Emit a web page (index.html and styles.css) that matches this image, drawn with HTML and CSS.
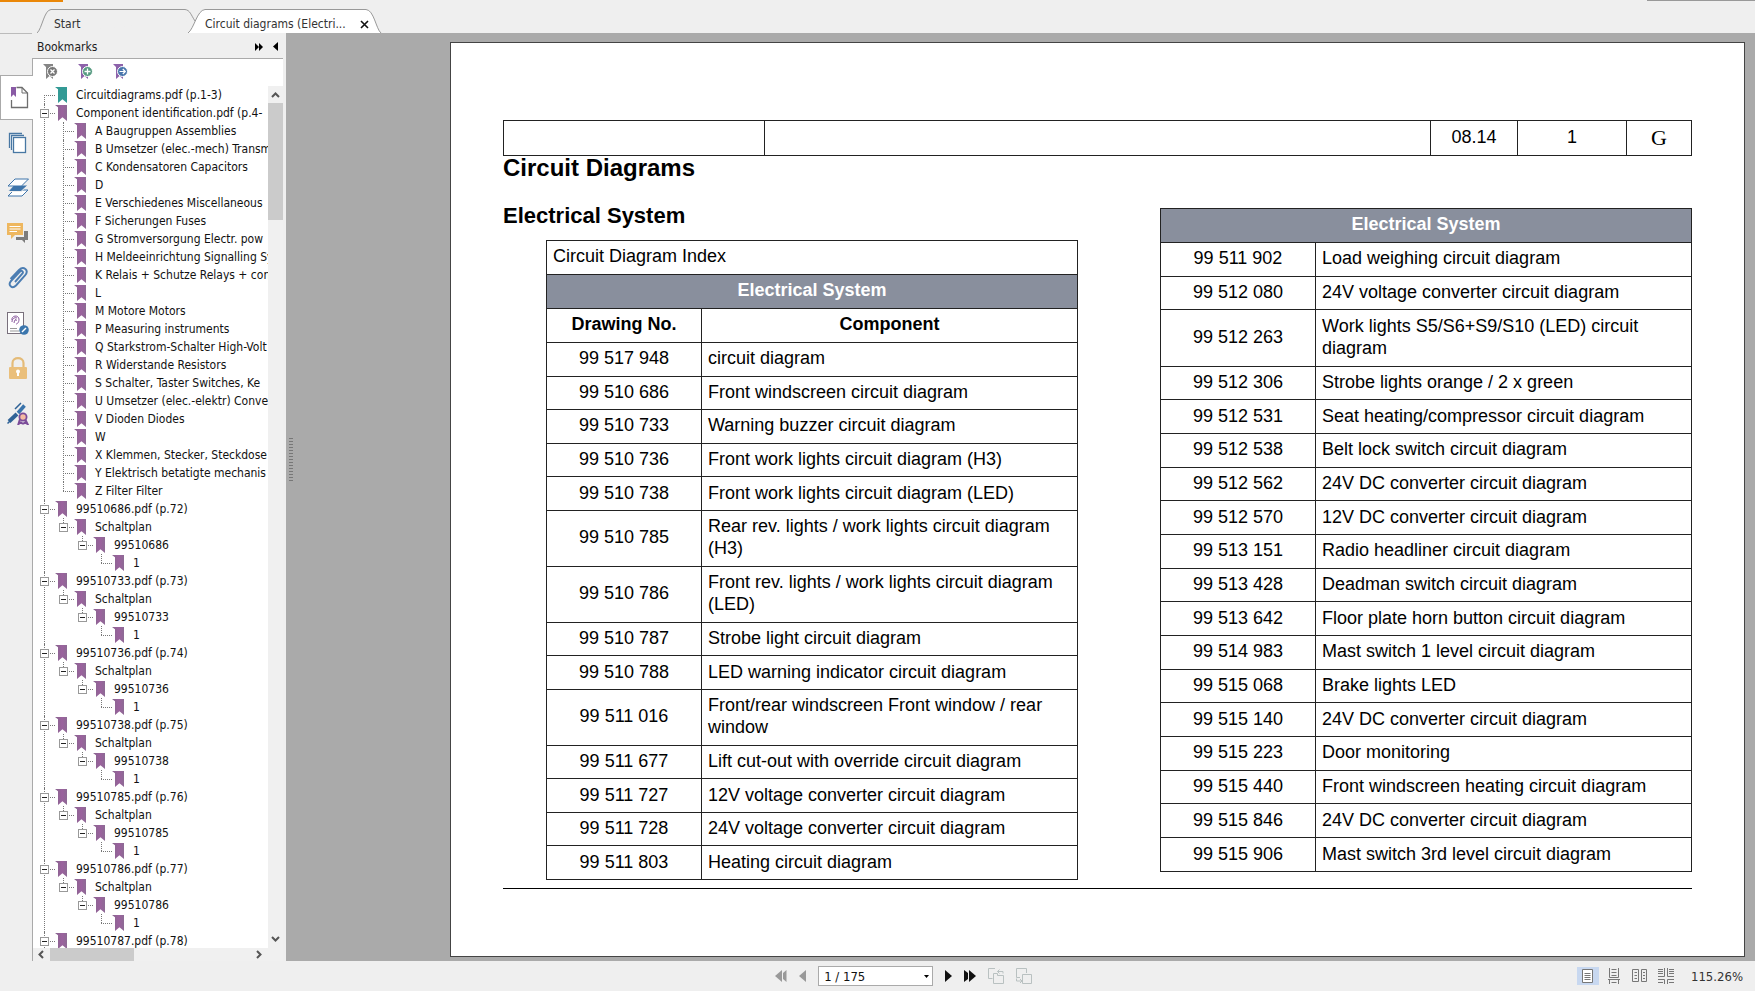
FILE: index.html
```html
<!DOCTYPE html>
<html lang="en">
<head>
<meta charset="utf-8">
<title>Circuit diagrams</title>
<link rel="stylesheet" href="styles.css">
</head>
<body>
<div class="app">
  <header class="tabbar">
    <span class="accent"></span>
    <span class="edge"></span>
    <button class="tab tab-start" type="button">
      <svg class="tab-shape" width="160" height="24" viewBox="0 0 160 24"><path d="M0 24 C5 20 7 1 14 0.5 H148 C153 1 154 6 158 12"/></svg>
      <span>Start</span>
    </button>
    <button class="tab tab-active" type="button">
      <svg class="tab-shape" width="194" height="24" viewBox="0 0 194 24"><path d="M0 24 C6 20 9 1 17 0.5 H178 C186 1 188 20 193 24"/></svg>
      <span>Circuit diagrams (Electri...</span>
      <svg class="close" width="9" height="9" viewBox="0 0 9 9"><path d="M1 1L8 8M8 1L1 8" stroke="#111" stroke-width="1.6"/></svg>
    </button>
  </header>

  <div class="main">
    <nav class="rail">
      <button class="rail-btn current" type="button" aria-label="Bookmarks"><svg width="20" height="24" viewBox="0 0 20 24"><path d="M7.5 2.5H13L18.500 8V22.500H2.500V15" fill="none" stroke="#6e6e6e" stroke-width="1.300"/><path d="M13 2.500V8H18.500" fill="none" stroke="#6e6e6e"/><path d="M2 2H7V12L4.500 9.500L2 12Z" fill="#8a5ba5"/></svg></button>
      <button class="rail-btn" type="button" aria-label="Pages"><svg width="20" height="24" viewBox="0 0 20 24"><g fill="#fff" stroke="#4877a3" stroke-width="1.300"><path d="M1.500 17V2.500H14"/><path d="M3.500 19V4.500H16" /><rect x="5.500" y="6.500" width="12" height="15"/></g></svg></button>
      <button class="rail-btn" type="button" aria-label="Layers"><svg width="22" height="22" viewBox="0 0 22 22"><path d="M7 13H21L15 19H1Z" fill="#fff" stroke="#3f75aa"/><path d="M7 8H21L14 14.500H1Z" fill="#3f75aa" stroke="#efefef"/><path d="M8 2H21.500L14.500 9H1Z" fill="#fff" stroke="#3f75aa"/></svg></button>
      <button class="rail-btn" type="button" aria-label="Comments"><svg width="22" height="22" viewBox="0 0 22 22"><path d="M17 9H21V18H18V21L15 18H9V15H17Z" fill="#7c7c7c"/><path d="M0 1H16V13H8L4 17V13H0Z" fill="#eeb75f"/><path d="M2.500 4.500H13.500M2.500 7H13.500M2.500 9.500H10" stroke="#fff"/></svg></button>
      <button class="rail-btn" type="button" aria-label="Attachments"><svg width="22" height="24" viewBox="0 0 22 24"><path d="M8 16L15.500 7.500C17 5.500 14.500 4 13 5.500L4 15C0.500 19 5 23.500 9 19.500L18 9.500C22.500 4 16.500 -0.500 12 4L3.500 13" fill="none" stroke="#4b7db2" stroke-width="1.900"/></svg></button>
      <button class="rail-btn" type="button" aria-label="Signatures"><svg width="22" height="24" viewBox="0 0 22 24"><rect x="0.500" y="1.500" width="16" height="21" fill="#fff" stroke="#79707c"/><path d="M5 9C4 5 11 3 12 8C12 12 10 13 9 13M7 12C8 7 10 8 9 10M5 11C5 8 7 6 10 7" fill="none" stroke="#89589d"/><path d="M3 17.500H10M3 20H12" stroke="#999"/><circle cx="17" cy="19" r="4.800" fill="#3b76ad"/><path d="M15 21L19 17" stroke="#fff" stroke-width="1.500"/></svg></button>
      <button class="rail-btn" type="button" aria-label="Security"><svg width="20" height="24" viewBox="0 0 20 24"><path d="M4.500 12V7C4.500 0.500 15.500 0.500 15.500 7V12" fill="none" stroke="#e4bb78" stroke-width="2.200"/><rect x="1" y="11" width="18" height="12" rx="1" fill="#eabf7b"/><circle cx="10" cy="15.500" r="2" fill="#fff"/><path d="M10 15V20" stroke="#fff" stroke-width="2"/></svg></button>
      <button class="rail-btn" type="button" aria-label="Digital signatures"><svg width="22" height="24" viewBox="0 0 22 24"><path d="M2 20.500L10 13" stroke="#2f6296" stroke-width="4"/><path d="M11 12L17.500 4.500" stroke="#3973ab" stroke-width="3.500"/><path d="M8 8L14 2M0.500 22.500L3 20" stroke="#2f6296" stroke-width="1.500"/><path d="M13 18L11.500 23L14 21.500L16 23M18 18L20.500 23L18 21.500L16 23" fill="none" stroke="#7b4c99" stroke-width="2"/><circle cx="16" cy="16" r="3.600" fill="#f5bba1" stroke="#7b4c99" stroke-width="1.800"/></svg></button>
    </nav>

    <aside class="panel">
      <div class="panel-head">
        <h2>Bookmarks</h2>
        <button type="button" aria-label="Expand"><svg width="8" height="8" viewBox="0 0 8 8"><path d="M0 0L4 4L0 8ZM4 0L8 4L4 8Z"/></svg></button>
        <button type="button" aria-label="Collapse panel"><svg width="5" height="9" viewBox="0 0 5 9"><path d="M5 0V9L0 4.500Z"/></svg></button>
      </div>
      <div class="panel-body">
        <div class="tools">
          <button type="button" aria-label="Delete bookmark"><svg width="15" height="16" viewBox="0 0 15 16"><path d="M0 0H10V15L6.500 12L3 15V3Z" fill="#858585"/><circle cx="9.500" cy="7.500" r="5" fill="#777" stroke="#fff"/><path d="M7.500 5.500L11.500 9.500M11.500 5.500L7.500 9.500" stroke="#fff" stroke-width="1.300"/></svg></button>
          <button type="button" aria-label="Add bookmark"><svg width="15" height="16" viewBox="0 0 15 16"><path d="M0 0H10V15L6.500 12L3 15V3Z" fill="#8d62aa"/><circle cx="9.500" cy="7.500" r="5" fill="#559a80" stroke="#fff"/><path d="M6.500 7.500H12.500M9.500 4.500V10.500" stroke="#fff" stroke-width="1.300"/></svg></button>
          <button type="button" aria-label="Go to bookmark"><svg width="15" height="16" viewBox="0 0 15 16"><path d="M0 0H10V15L6.500 12L3 15V3Z" fill="#8d62aa"/><circle cx="9.500" cy="7.500" r="5" fill="#4976ac" stroke="#fff"/><path d="M6.500 7.500H12M9.800 5L12.300 7.500L9.800 10" fill="none" stroke="#fff" stroke-width="1.200"/></svg></button>
        </div>
        <div class="scroller">
          <ul class="tree">
            <li><a class="node teal" href="#">Circuitdiagrams.pdf (p.1-3)</a></li>
            <li><button class="toggle" type="button" aria-label="Collapse"></button><a class="node" href="#">Component identification.pdf (p.4-</a>
              <ul>
                <li><a class="node" href="#">A Baugruppen Assemblies</a></li>
                <li><a class="node" href="#">B Umsetzer (elec.-mech) Transm</a></li>
                <li><a class="node" href="#">C Kondensatoren Capacitors</a></li>
                <li><a class="node" href="#">D</a></li>
                <li><a class="node" href="#">E Verschiedenes Miscellaneous</a></li>
                <li><a class="node" href="#">F Sicherungen Fuses</a></li>
                <li><a class="node" href="#">G Stromversorgung Electr. pow</a></li>
                <li><a class="node" href="#">H Meldeeinrichtung Signalling Sy</a></li>
                <li><a class="node" href="#">K Relais + Schutze Relays + con</a></li>
                <li><a class="node" href="#">L</a></li>
                <li><a class="node" href="#">M Motore Motors</a></li>
                <li><a class="node" href="#">P Measuring instruments</a></li>
                <li><a class="node" href="#">Q Starkstrom-Schalter High-Volt</a></li>
                <li><a class="node" href="#">R Widerstande Resistors</a></li>
                <li><a class="node" href="#">S Schalter, Taster Switches, Ke</a></li>
                <li><a class="node" href="#">U Umsetzer (elec.-elektr) Conve</a></li>
                <li><a class="node" href="#">V Dioden Diodes</a></li>
                <li><a class="node" href="#">W</a></li>
                <li><a class="node" href="#">X Klemmen, Stecker, Steckdose</a></li>
                <li><a class="node" href="#">Y Elektrisch betatigte mechanis</a></li>
                <li><a class="node" href="#">Z Filter Filter</a></li>
              </ul>
            </li>
            <li><button class="toggle" type="button" aria-label="Collapse"></button><a class="node" href="#">99510686.pdf (p.72)</a>
              <ul><li><button class="toggle" type="button" aria-label="Collapse"></button><a class="node" href="#">Schaltplan</a>
                <ul><li><button class="toggle" type="button" aria-label="Collapse"></button><a class="node" href="#">99510686</a>
                  <ul><li><a class="node" href="#">1</a></li></ul></li></ul></li></ul></li>
            <li><button class="toggle" type="button" aria-label="Collapse"></button><a class="node" href="#">99510733.pdf (p.73)</a>
              <ul><li><button class="toggle" type="button" aria-label="Collapse"></button><a class="node" href="#">Schaltplan</a>
                <ul><li><button class="toggle" type="button" aria-label="Collapse"></button><a class="node" href="#">99510733</a>
                  <ul><li><a class="node" href="#">1</a></li></ul></li></ul></li></ul></li>
            <li><button class="toggle" type="button" aria-label="Collapse"></button><a class="node" href="#">99510736.pdf (p.74)</a>
              <ul><li><button class="toggle" type="button" aria-label="Collapse"></button><a class="node" href="#">Schaltplan</a>
                <ul><li><button class="toggle" type="button" aria-label="Collapse"></button><a class="node" href="#">99510736</a>
                  <ul><li><a class="node" href="#">1</a></li></ul></li></ul></li></ul></li>
            <li><button class="toggle" type="button" aria-label="Collapse"></button><a class="node" href="#">99510738.pdf (p.75)</a>
              <ul><li><button class="toggle" type="button" aria-label="Collapse"></button><a class="node" href="#">Schaltplan</a>
                <ul><li><button class="toggle" type="button" aria-label="Collapse"></button><a class="node" href="#">99510738</a>
                  <ul><li><a class="node" href="#">1</a></li></ul></li></ul></li></ul></li>
            <li><button class="toggle" type="button" aria-label="Collapse"></button><a class="node" href="#">99510785.pdf (p.76)</a>
              <ul><li><button class="toggle" type="button" aria-label="Collapse"></button><a class="node" href="#">Schaltplan</a>
                <ul><li><button class="toggle" type="button" aria-label="Collapse"></button><a class="node" href="#">99510785</a>
                  <ul><li><a class="node" href="#">1</a></li></ul></li></ul></li></ul></li>
            <li><button class="toggle" type="button" aria-label="Collapse"></button><a class="node" href="#">99510786.pdf (p.77)</a>
              <ul><li><button class="toggle" type="button" aria-label="Collapse"></button><a class="node" href="#">Schaltplan</a>
                <ul><li><button class="toggle" type="button" aria-label="Collapse"></button><a class="node" href="#">99510786</a>
                  <ul><li><a class="node" href="#">1</a></li></ul></li></ul></li></ul></li>
            <li class="continues"><button class="toggle" type="button" aria-label="Collapse"></button><a class="node" href="#">99510787.pdf (p.78)</a></li>
          </ul>
          <div class="vbar">
            <svg width="9" height="6" viewBox="0 0 9 6"><path d="M1 5L4.500 1.500L8 5"/></svg>
            <span class="vthumb"></span>
            <svg width="9" height="6" viewBox="0 0 9 6"><path d="M1 1L4.500 4.500L8 1"/></svg>
          </div>
        </div>
        <div class="hbar">
          <svg width="6" height="9" viewBox="0 0 6 9"><path d="M5 1L1.500 4.500L5 8"/></svg>
          <span class="hthumb"></span>
          <svg width="6" height="9" viewBox="0 0 6 9"><path d="M1 1L4.500 4.500L1 8"/></svg>
        </div>
      </div>
    </aside>

    <main class="viewer">
      <span class="grip"></span>
      <article class="page">
        <table class="running">
          <colgroup><col class="r1"><col><col class="r3"><col class="r4"><col class="r5"></colgroup>
          <tr><td></td><td></td><td>08.14</td><td>1</td><td class="serif">G</td></tr>
        </table>
        <h1>Circuit Diagrams</h1>
        <div class="columns">
          <section class="left">
            <h2>Electrical System</h2>
            <table class="index">
              <colgroup><col class="no"><col></colgroup>
              <thead>
                <tr><td colspan="2" class="caption">Circuit Diagram Index</td></tr>
                <tr><th colspan="2" class="band">Electrical System</th></tr>
                <tr><th>Drawing No.</th><th>Component</th></tr>
              </thead>
              <tbody>
                <tr><td>99 517 948</td><td>circuit diagram</td></tr>
                <tr><td>99 510 686</td><td>Front windscreen circuit diagram</td></tr>
                <tr><td>99 510 733</td><td>Warning buzzer circuit diagram</td></tr>
                <tr><td>99 510 736</td><td>Front work lights circuit diagram (H3)</td></tr>
                <tr><td>99 510 738</td><td>Front work lights circuit diagram (LED)</td></tr>
                <tr><td>99 510 785</td><td>Rear rev. lights / work lights circuit diagram (H3)</td></tr>
                <tr><td>99 510 786</td><td>Front rev. lights / work lights circuit diagram (LED)</td></tr>
                <tr><td>99 510 787</td><td>Strobe light circuit diagram</td></tr>
                <tr><td>99 510 788</td><td>LED warning indicator circuit diagram</td></tr>
                <tr><td>99 511 016</td><td>Front/rear windscreen Front window / rear window</td></tr>
                <tr><td>99 511 677</td><td>Lift cut-out with override circuit diagram</td></tr>
                <tr><td>99 511 727</td><td>12V voltage converter circuit diagram</td></tr>
                <tr><td>99 511 728</td><td>24V voltage converter circuit diagram</td></tr>
                <tr><td>99 511 803</td><td>Heating circuit diagram</td></tr>
              </tbody>
            </table>
          </section>
          <section class="right">
            <table class="index">
              <colgroup><col class="no"><col></colgroup>
              <thead><tr><th colspan="2" class="band">Electrical System</th></tr></thead>
              <tbody>
                <tr><td>99 511 902</td><td>Load weighing circuit diagram</td></tr>
                <tr><td>99 512 080</td><td>24V voltage converter circuit diagram</td></tr>
                <tr><td>99 512 263</td><td>Work lights S5/S6+S9/S10 (LED) circuit diagram</td></tr>
                <tr><td>99 512 306</td><td>Strobe lights orange / 2 x green</td></tr>
                <tr><td>99 512 531</td><td>Seat heating/compressor circuit diagram</td></tr>
                <tr><td>99 512 538</td><td>Belt lock switch circuit diagram</td></tr>
                <tr><td>99 512 562</td><td>24V DC converter circuit diagram</td></tr>
                <tr><td>99 512 570</td><td>12V DC converter circuit diagram</td></tr>
                <tr><td>99 513 151</td><td>Radio headliner circuit diagram</td></tr>
                <tr><td>99 513 428</td><td>Deadman switch circuit diagram</td></tr>
                <tr><td>99 513 642</td><td>Floor plate horn button circuit diagram</td></tr>
                <tr><td>99 514 983</td><td>Mast switch 1 level circuit diagram</td></tr>
                <tr><td>99 515 068</td><td>Brake lights LED</td></tr>
                <tr><td>99 515 140</td><td>24V DC converter circuit diagram</td></tr>
                <tr><td>99 515 223</td><td>Door monitoring</td></tr>
                <tr><td>99 515 440</td><td>Front windscreen heating circuit diagram</td></tr>
                <tr><td>99 515 846</td><td>24V DC converter circuit diagram</td></tr>
                <tr><td>99 515 906</td><td>Mast switch 3rd level circuit diagram</td></tr>
              </tbody>
            </table>
          </section>
        </div>
        <hr>
      </article>
    </main>
  </div>

  <footer class="status">
    <div class="pager">
      <button type="button" aria-label="First page"><svg width="12" height="12" viewBox="0 0 12 12"><path d="M7 0V12L0 6Z" fill="#999"/><path d="M11.500 0V12L8 9V3Z" fill="#999"/></svg></button>
      <button type="button" aria-label="Previous page"><svg width="7" height="12" viewBox="0 0 7 12"><path d="M7 0V12L0 6Z" fill="#999"/></svg></button>
      <span class="combo"><select aria-label="Page"><option>1 / 175</option></select><svg width="5" height="3" viewBox="0 0 5 3"><path d="M0 0H5L2.500 3Z"/></svg></span>
      <button type="button" aria-label="Next page"><svg width="7" height="12" viewBox="0 0 7 12"><path d="M0 0V12L7 6Z" fill="#111"/></svg></button>
      <button type="button" aria-label="Last page"><svg width="12" height="12" viewBox="0 0 12 12"><path d="M5 0V12L12 6Z" fill="#111"/><path d="M0 0L4 3V9L0 12Z" fill="#111"/></svg></button>
      <button type="button" aria-label="Previous view"><svg width="16" height="16" viewBox="0 0 16 16" fill="none" stroke="#b9c1c1"><path d="M4.500 10.500H0.500V0.500H7M5.500 5.500H9.500V7.500H15.500V15.500H5.500ZM15 5.500V3.500H9.500M11.500 1.500L9.500 3.500L11.500 5.500"/></svg></button>
      <button type="button" aria-label="Next view"><svg width="16" height="16" viewBox="0 0 16 16" fill="none" stroke="#b9c1c1"><path d="M4 9.500H0.500V0.500H10.500V5M6.500 6.500H15.500V15.500H6.500ZM0.500 10.500V13H6M4 11L6 13L4 15"/></svg></button>
    </div>
    <div class="views">
      <button class="view on" type="button" aria-label="Single page"><svg width="12" height="14" viewBox="0 0 12 14"><path d="M0.500 0.500H10.500V13.500H0.500Z" fill="#fff"/><path d="M2.500 4.500H8.500M2.500 6.500H8.500M2.500 8.500H8.500M2.500 10.500H8.500"/></svg></button>
      <button class="view" type="button" aria-label="Continuous"><svg width="12" height="16" viewBox="0 0 12 16"><path d="M1.500 0V9.500H10.500V0M3.500 1.500H8.500M3.500 4.500H8.500M3.500 7.500H8.500M0 11.500H12M1.500 16V11.500M10.500 16V11.500M3.500 14.500H8.500"/></svg></button>
      <button class="view" type="button" aria-label="Facing"><svg width="16" height="14" viewBox="0 0 16 14"><path d="M0.500 0.500H6.500V12.500H0.500ZM9.500 0.500H14.500V12.500H9.500ZM2.500 3.500H5M2.500 6.500H5M2.500 9.500H5M11 3.500H13M11 6.500H13M11 9.500H13"/></svg></button>
      <button class="view" type="button" aria-label="Continuous facing"><svg width="16" height="16" viewBox="0 0 16 16"><path d="M6.500 0V8.500H0M9.500 0V8.500H16M0 1.500H5M0 3.500H5M0 5.500H5M11 1.500H16M11 3.500H16M11 5.500H16M0 11.500H6.500V16M16 11.500H9.500V16M0 14.500H5M11 14.500H16"/></svg></button>
      <span class="zoom">115.26%</span>
    </div>
  </footer>
</div>
</body>
</html>
```
FILE: styles.css
```css
* { box-sizing: border-box; }
body {
  margin: 0;
  background: #efefef;
  color: #1c1c1c;
  font-family: "DejaVu Sans Condensed", "Noto Sans", sans-serif;
  font-size: 12px;
}
button {
  margin: 0;
  padding: 0;
  border: 0;
  background: none;
  color: inherit;
  font: inherit;
}
svg { display: block; flex: none; }
.app { display: flex; flex-direction: column; height: 100vh; }

/* Tabs */
.tabbar {
  position: relative;
  display: flex;
  align-items: flex-end;
  height: 33px;
  padding-left: 37px;
}
.accent { position: absolute; top: 0; left: 0; width: 63px; height: 2px; background: #ea8708; }
.edge { position: absolute; top: 0; right: 0; width: 108px; height: 1px; background: #999; }
.tab {
  position: relative;
  display: flex;
  align-items: center;
  height: 24px;
  padding: 6px 0 0 17px;
  color: #333;
}
.tab-start { width: 151px; }
.tab-active { width: 194px; }
.tab > span { position: relative; flex: 1; text-align: left; white-space: nowrap; }
.tab-shape { position: absolute; left: 0; top: 0; fill: #efefef; stroke: #999; }
.tab-active .tab-shape { fill: #fff; }
.close { position: relative; margin-right: 13px; }

.main { display: flex; flex: 1; min-height: 0; }

/* Icon rail */
.rail { width: 32px; padding-top: 41px; border-top: 1px solid #bbb; }
.rail-btn { display: flex; align-items: center; justify-content: center; width: 32px; height: 45px; padding-left: 4px; }
.rail-btn.current { position: relative; width: 33px; padding: 0 0 2px 3px; background: #fff; border: 1px solid #aaa; border-right: 0; }

/* Bookmarks panel */
.panel { display: flex; flex-direction: column; width: 254px; padding-right: 3px; }
.panel-head { display: flex; align-items: center; gap: 10px; height: 26px; padding: 2px 5px 0; border-bottom: 1px solid #aaa; }
.panel-head h2 { flex: 1; margin: 0; font-size: 12px; font-weight: 400; }
.panel-body { display: flex; flex-direction: column; flex: 1; min-height: 0; background: #fff; border-left: 1px solid #aaa; }
.tools { display: flex; align-items: flex-start; gap: 20px; height: 27px; padding: 5px 10px 0; }
.scroller { display: flex; flex: 1; min-height: 0; }
.tree { flex: 1; min-width: 0; overflow: hidden; padding: 0 0 0 11px; }
.tree, .tree ul { margin: 0; list-style: none; }
.tree ul { padding: 0 0 0 19px; }
.tree li { position: relative; }
.tree li::before {
  content: "";
  position: absolute;
  top: 0;
  bottom: 0;
  left: 0;
  border-left: 1px dotted #777;
}
.tree li:last-child::before { bottom: auto; height: 9px; }
.tree > li:first-child::before { top: 9px; }
.tree > li.continues::before { height: 18px; }
.tree li::after {
  content: "";
  position: absolute;
  top: 9px;
  left: 0;
  width: 11px;
  border-top: 1px dotted #777;
}
.toggle {
  position: absolute;
  z-index: 1;
  top: 5px;
  left: -4px;
  width: 9px;
  height: 9px;
  border: 1px solid #999;
  background: linear-gradient(#222, #222) center / 5px 1px no-repeat #fff;
}
.node {
  display: flex;
  align-items: center;
  gap: 9px;
  height: 18px;
  margin-left: 11px;
  color: #111;
  text-decoration: none;
  white-space: nowrap;
}
.node::before {
  content: "";
  position: relative;
  z-index: 1;
  flex: none;
  width: 12px;
  height: 16px;
  background: linear-gradient(90deg, #87658e, #9b629e 60%, #8d6a94);
  clip-path: polygon(0 0, 100% 0, 100% 100%, 62% 76%, 25% 100%, 25% 14%);
}
.node.teal::before { background: #339a95; }
.vbar { display: flex; flex-direction: column; align-items: center; width: 15px; padding: 6px 0; background: #f0f0f0; }
.vbar svg, .hbar svg { fill: none; stroke: #555; stroke-width: 2; }
.vthumb { width: 15px; height: 117px; margin: 5px 0 auto; background: #cbcbcb; }
.hbar { display: flex; align-items: center; height: 13px; padding: 0 21px 0 5px; background: #f0f0f0; }
.hthumb { width: 84px; height: 13px; margin: 0 auto 0 6px; background: #cbcbcb; }

/* Document */
.viewer { position: relative; flex: 1; display: flex; min-width: 0; padding: 9px 10px 4px 164px; background: #aaa; }
.grip {
  position: absolute;
  left: 3px;
  top: 405px;
  width: 4px;
  height: 44px;
  background: linear-gradient(#777, #777) 0 0 / 1px 1px;
  background: repeating-linear-gradient(#777 0 1px, transparent 1px 3px);
}
.page {
  flex: 1;
  min-width: 0;
  padding: 77px 52px 0;
  background: #fff;
  border: 1px solid #444;
  color: #000;
  font-family: "Liberation Sans", Arial, sans-serif;
  font-size: 18px;
  line-height: 22px;
}
table { width: 100%; border-collapse: collapse; table-layout: fixed; }
td, th { border: 1px solid #222; }
.running td { height: 35px; padding: 0 0 3px; text-align: center; }
.running .serif { padding: 0; font-family: "Liberation Serif", "Times New Roman", serif; font-size: 22px; }
.r1 { width: 22%; }
.r3 { width: 87px; }
.r4 { width: 109px; }
.r5 { width: 65px; }
.page h1 { margin: 0; font-size: 24px; line-height: 24px; }
.columns { display: grid; grid-template-columns: 575fr 532fr; column-gap: 82px; }
.left h2 { margin: 0; padding: 23px 0 11px; font-size: 22px; line-height: 26px; }
.left .index { width: calc(100% - 43px); height: 640px; margin-left: 43px; }
.right { padding-top: 28px; }
.right .index { height: 664px; }
.index .no { width: 155px; }
.index td, .index th { padding: 4px 5px 6px; }
.index thead td, .index thead th { padding-bottom: 7px; }
.index td + td, .index td.caption { padding-left: 6px; }
.index td:first-child { text-align: center; }
.index td.caption { text-align: left; }
.index .band { background: #898f9d; color: #fff; }
.page hr { margin: 8px 0 0; border: 0; border-top: 1px solid #000; }

/* Status bar */
.status { display: flex; align-items: center; justify-content: space-between; height: 30px; padding: 0 12px 0 44vw; }
.pager { display: flex; align-items: center; gap: 12px; padding-left: 3px; }
.combo { position: relative; display: flex; align-items: center; }
.combo select {
  width: 115px;
  height: 20px;
  padding: 0 5px;
  border: 1px solid #aaa;
  border-radius: 0;
  background: #fff;
  color: #111;
  font: inherit;
  font-size: 13px;
  appearance: none;
}
.combo svg { position: absolute; right: 4px; }
.views { display: flex; align-items: center; gap: 4px; }
.view { display: flex; align-items: center; justify-content: center; width: 22px; height: 18px; }
.view.on { background: #c8d8f0; }
.view svg { fill: none; stroke: #777; }
.zoom { padding-left: 10px; color: #333; font-size: 13px; }
```
